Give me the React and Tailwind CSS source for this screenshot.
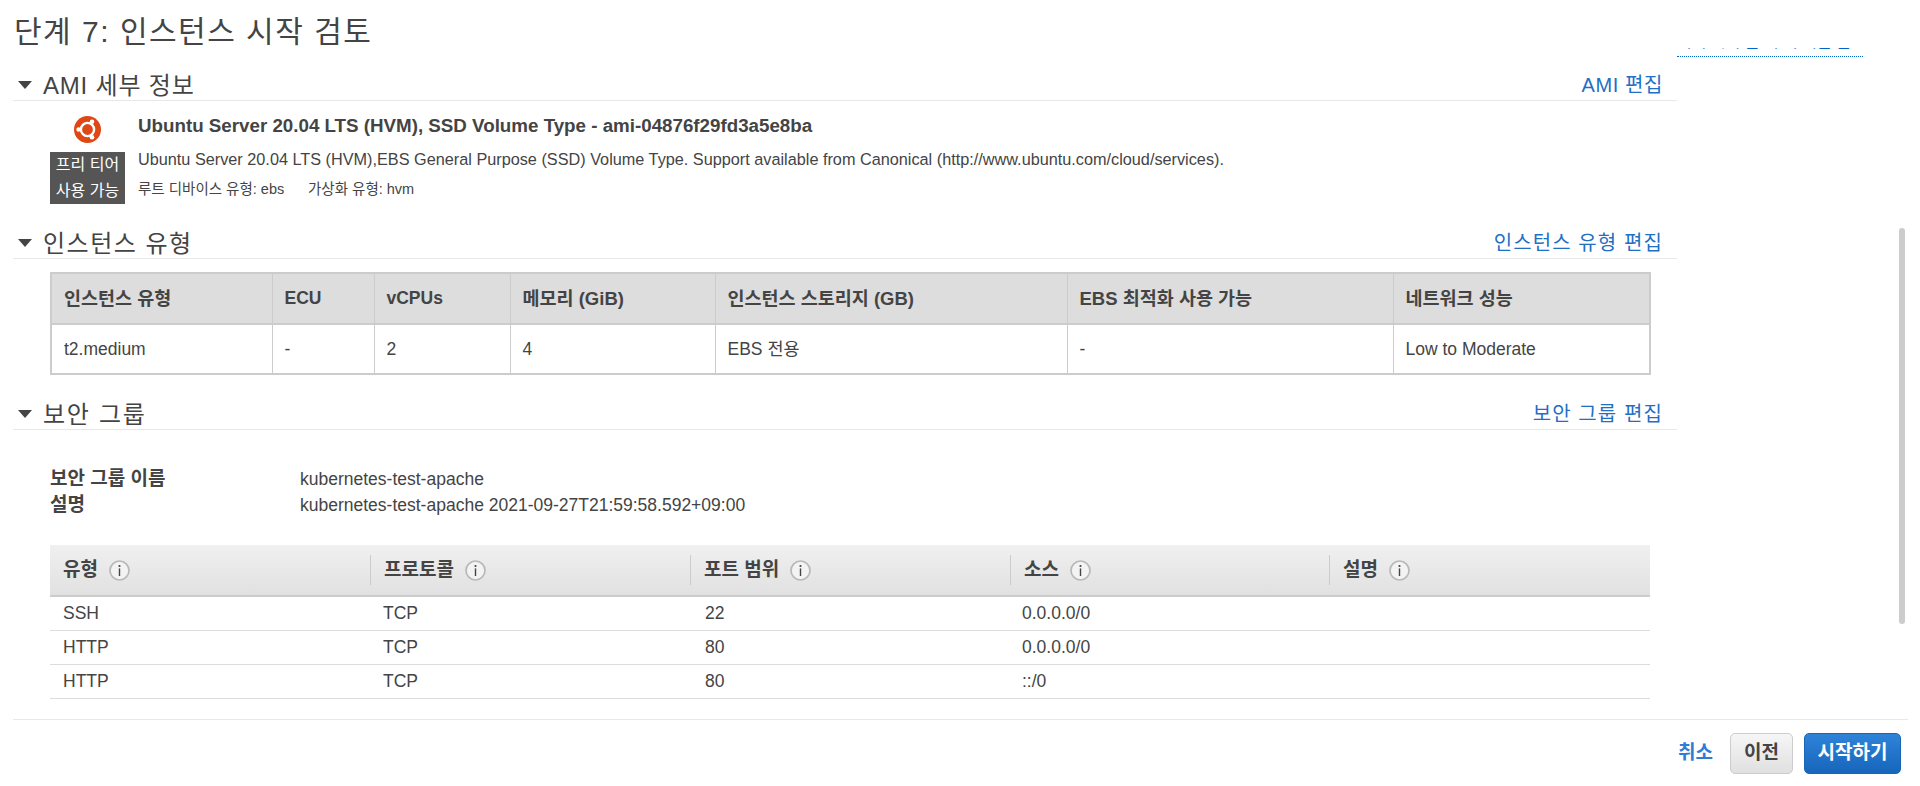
import React from 'react';

const FONT = "font-['Liberation_Sans','Noto_Sans_CJK_KR',sans-serif]";

const UbuntuLogo = () => (
  <svg width="27" height="27" viewBox="0 0 27 27">
    <circle cx="13.5" cy="13.5" r="13.5" fill="#dd4814" />
    <circle cx="13.5" cy="13.5" r="6.6" fill="none" stroke="#fff" strokeWidth="2.4" />
    <circle cx="4.6" cy="13.5" r="2.3" fill="#fff" />
    <circle cx="18" cy="5.8" r="2.3" fill="#fff" />
    <circle cx="18" cy="21.2" r="2.3" fill="#fff" />
  </svg>
);

const InfoIcon = () => (
  <svg width="21" height="21" viewBox="0 0 21 21" className="shrink-0">
    <circle cx="10.5" cy="10.5" r="9.5" fill="#f3f3f3" stroke="#b8b8b8" strokeWidth="1.7" />
    <circle cx="10.5" cy="6" r="1.1" fill="#444" />
    <rect x="9.8" y="8.4" width="1.4" height="7.6" fill="#444" />
  </svg>
);

const Section = ({ title, link, titleClass, linkClass, children }) => (
  <section>
    <div className="flex items-center h-[31px] border-b border-[#e8e8e8] pr-[14px]">
      <span className="ml-[5px] w-0 h-0 border-x-[7px] border-x-transparent border-t-[8px] border-t-[#444]" />
      <h2 className={`ml-[11px] text-[24px] leading-[31px] text-[#444] ${titleClass}`}>{title}</h2>
      <a className={`ml-auto text-[20px] leading-[31px] text-[#1f6fc5] ${linkClass}`}>{link}</a>
    </div>
    {children}
  </section>
);

const typeCols = [
  ['인스턴스 유형', 't2.medium', 'w-[221px]', 'text-[18.5px]'],
  ['ECU', '-', 'w-[102px]', 'text-[17.5px]'],
  ['vCPUs', '2', 'w-[136px]', 'text-[17.5px]'],
  ['메모리 (GiB)', '4', 'w-[205px]', 'text-[18.5px]'],
  ['인스턴스 스토리지 (GB)', 'EBS 전용', 'w-[352px]', 'text-[18.5px]'],
  ['EBS 최적화 사용 가능', '-', 'w-[326px]', 'text-[18.5px]'],
  ['네트워크 성능', 'Low to Moderate', 'w-[257px]', 'text-[18.5px]'],
];

const rules = [
  ['SSH', 'TCP', '22', '0.0.0.0/0'],
  ['HTTP', 'TCP', '80', '0.0.0.0/0'],
  ['HTTP', 'TCP', '80', '::/0'],
];

const ruleHeads = ['유형', '프로토콜', '포트 범위', '소스', '설명'];
const rulePads = ['pl-[13px]', 'pl-[13px]', 'pl-[15px]', 'pl-[12px]'];

const App = () => {
  return (
    <div className={`relative w-[1920px] h-[786px] overflow-hidden bg-white text-[#444] ${FONT}`}>
      <div className="flex h-[719px]">
        <div className="w-[1677px] shrink-0 pl-[13px]">
          <h1 className="h-[57px] mb-[13px] pl-[1px] pt-[10px] text-[30px] leading-[44px] tracking-[1.5px] text-[#444]">
            단계 7: 인스턴스 시작 검토
          </h1>

          <Section title="AMI 세부 정보" link="AMI 편집" titleClass="tracking-[0.8px]" linkClass="tracking-[0.6px]">
            <div className="flex h-[127px] pl-[37px]">
              <div className="w-[75px] pt-[15px] flex flex-col items-center">
                <UbuntuLogo />
                <div className="mt-[9px] w-[75px] h-[52px] bg-[#555] text-white text-center text-[16px] leading-[26px]">
                  프리 티어
                  <br />
                  사용 가능
                </div>
              </div>
              <div className="ml-[13px] pt-[14px]">
                <div className="text-[18.75px] font-bold leading-[22px] text-[#444]">
                  Ubuntu Server 20.04 LTS (HVM), SSD Volume Type - ami-04876f29fd3a5e8ba
                </div>
                <div className="mt-[11px] text-[16.25px] leading-[22px]">
                  Ubuntu Server 20.04 LTS (HVM),EBS General Purpose (SSD) Volume Type. Support available from Canonical (http://www.ubuntu.com/cloud/services).
                </div>
                <div className="mt-[9px] flex text-[14.5px] leading-[20px]">
                  <span className="w-[170px]">루트 디바이스 유형: ebs</span>
                  <span>가상화 유형: hvm</span>
                </div>
              </div>
            </div>
          </Section>

          <Section title="인스턴스 유형" link="인스턴스 유형 편집" titleClass="tracking-[1.5px]" linkClass="tracking-[1.1px]">
            <div className="h-[140px] pl-[37px] pt-[13px]">
              <table className="table-fixed w-[1599px] border-collapse border-2 border-[#cccccc] text-[17.5px]">
                <thead>
                  <tr className="h-[51px] bg-[#dddddd]">
                    {typeCols.map(([head, , width, size]) => (
                      <th key={head} className={`${width} ${size} border border-[#cccccc] border-b-2 px-[12px] text-left font-bold text-[#444]`}>
                        {head}
                      </th>
                    ))}
                  </tr>
                </thead>
                <tbody>
                  <tr className="h-[50px]">
                    {typeCols.map(([head, value]) => (
                      <td key={head} className="border border-[#cccccc] px-[12px]">
                        {value}
                      </td>
                    ))}
                  </tr>
                </tbody>
              </table>
            </div>
          </Section>

          <Section title="보안 그룹" link="보안 그룹 편집" titleClass="tracking-[1.7px]" linkClass="tracking-[1.1px]">
            <div className="pl-[37px]">
              <div className="pt-[36px] h-[115px] text-[17.5px] leading-[26px]">
                <div className="flex">
                  <span className="w-[250px] text-[19px] font-bold">보안 그룹 이름</span>
                  <span>kubernetes-test-apache</span>
                </div>
                <div className="flex">
                  <span className="w-[250px] text-[19px] font-bold">설명</span>
                  <span>kubernetes-test-apache 2021-09-27T21:59:58.592+09:00</span>
                </div>
              </div>
              <div className="w-[1600px] text-[17.5px]">
                <div className="grid grid-cols-[320px_320px_320px_319px_321px] items-center h-[52px] border-b-2 border-[#cccccc] bg-gradient-to-b from-[#f0f0f0] to-[#e1e1e1]">
                  {ruleHeads.map((head, i) => (
                    <div key={head} className={`flex items-center h-[30px] gap-[11px] pl-[13px] text-[19px] font-bold ${i > 0 ? 'border-l border-[#cccccc]' : ''}`}>
                      {head}
                      <InfoIcon />
                    </div>
                  ))}
                </div>
                {rules.map((rule, r) => (
                  <div key={r} className="grid grid-cols-[320px_320px_320px_319px_321px] items-center h-[34px] border-b border-[#dddddd]">
                    {rule.map((cell, i) => (
                      <div key={i} className={rulePads[i]}>
                        {cell}
                      </div>
                    ))}
                    <div />
                  </div>
                ))}
              </div>
            </div>
          </Section>
        </div>

        <div className="w-[186px] shrink-0 pt-[48px]">
          <div className="h-[1px] overflow-hidden">
            <div className="whitespace-nowrap -mt-[14px] text-[16px] leading-[16px] text-[#0066cc]">
              이기 시기 를 이 기 이를 를
            </div>
          </div>
          <div className="mt-[7px] border-t border-dotted border-[#0066cc]" />
        </div>
      </div>

      {/* scrollbar thumb sits over the page edge */}
      <div className="absolute left-[1899px] top-[228px] w-[6px] h-[396px] rounded-[3px] bg-[#cccccc]" />

      <div className="ml-[13px] mr-[12px] h-[67px] border-t border-[#e8e8e8] pr-[7px] pt-[13px] flex items-start justify-end">
        <a className="mt-[10px] text-[19px] leading-[20px] font-bold text-[#2e7cd6]">취소</a>
        <button className="ml-[17px] w-[63px] h-[41px] rounded-[5px] border border-[#cccccc] bg-gradient-to-b from-[#f6f6f6] to-[#e0e0e0] text-[19px] font-bold text-[#444]">
          이전
        </button>
        <button className="ml-[11px] w-[97px] h-[41px] rounded-[5px] border border-[#1a66b5] bg-gradient-to-b from-[#2e83d9] to-[#1666bb] text-[19px] font-bold text-white">
          시작하기
        </button>
      </div>
    </div>
  );
};

export default App;
